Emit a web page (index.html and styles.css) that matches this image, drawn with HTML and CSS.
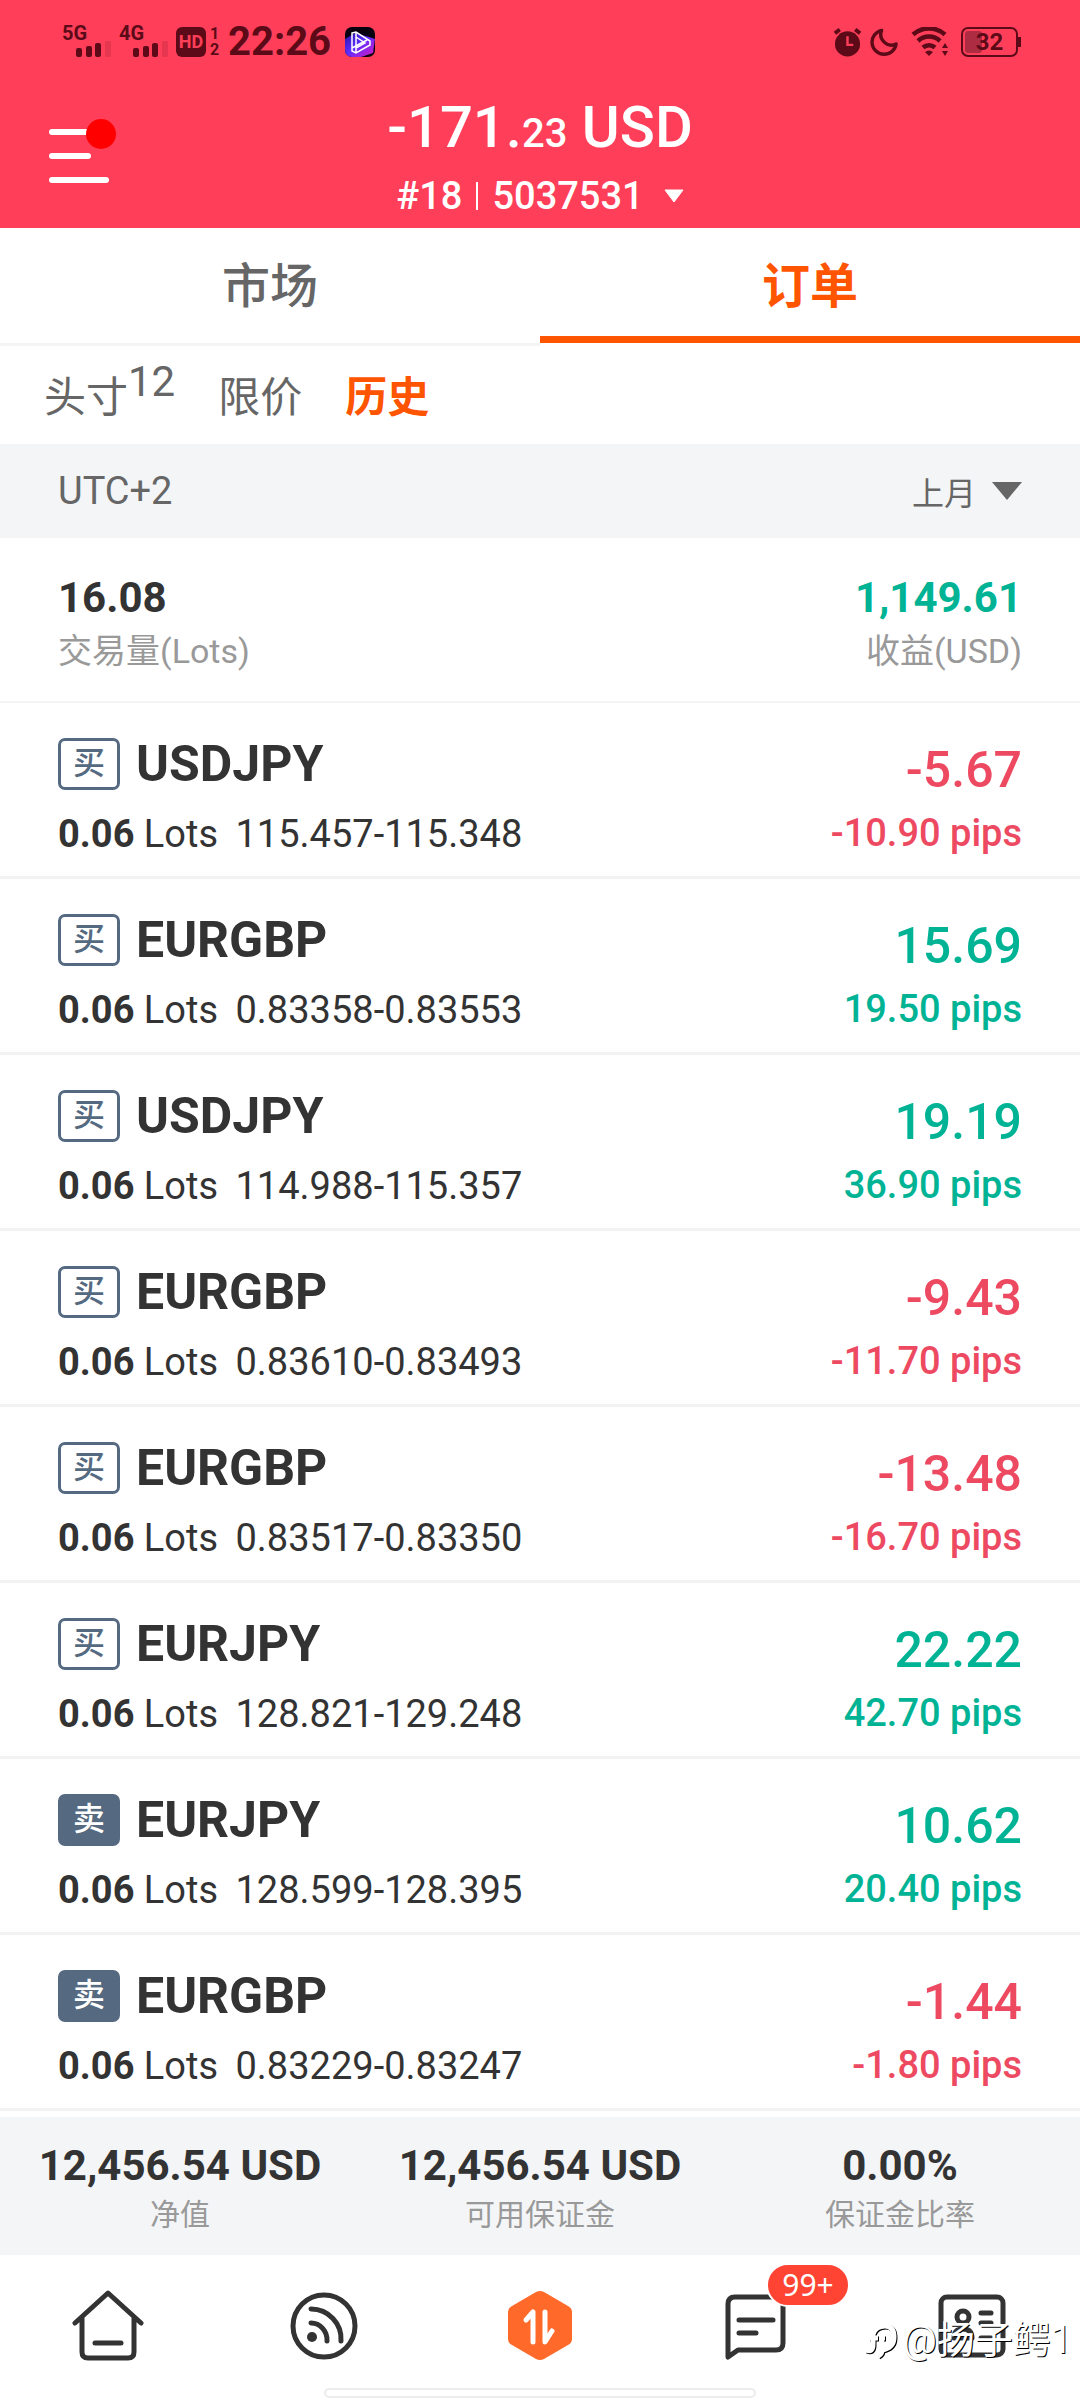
FILE: index.html
```html
<!DOCTYPE html>
<html lang="zh-CN">

<head>
    <meta charset="UTF-8">
    <meta name="viewport" content="width=device-width, initial-scale=1.0">
    <title>订单</title>
    <link rel="stylesheet" href="styles.css">
</head>
<body>
    <header class="top">
        <div class="status-bar">
            <div class="status-left">
                <span class="signal">
                    <span class="net">5G</span>
                    <svg class="bars" viewBox="0 0 36 16"><rect x="0" y="7" width="6" height="9" rx="2"/><rect x="10" y="5" width="6" height="11" rx="2"/><rect x="19" y="2" width="6" height="14" rx="2"/><rect x="29" y="0" width="6" height="16" rx="1" opacity=".15"/></svg>
                </span>
                <span class="signal">
                    <span class="net">4G</span>
                    <svg class="bars" viewBox="0 0 36 16"><rect x="0" y="7" width="6" height="9" rx="2"/><rect x="10" y="5" width="6" height="11" rx="2"/><rect x="19" y="2" width="6" height="14" rx="2"/><rect x="29" y="0" width="6" height="16" rx="1" opacity=".15"/></svg>
                </span>
                <span class="hd">HD</span>
                <span class="sims"><span>1</span><span>2</span></span>
                <time class="clock">22:26</time>
                <svg class="app-badge" viewBox="0 0 30 30">
                    <defs>
                        <linearGradient id="glow" x1="0" y1="0" x2="1" y2="1">
                            <stop offset="0" stop-color="#2a10a0"/><stop offset=".45" stop-color="#5b2cff"/><stop offset="1" stop-color="#e01ac0"/>
                        </linearGradient>
                    </defs>
                    <rect width="30" height="30" rx="7" fill="#08000f"/>
                    <path d="M0 12L10 6l14 4 6 2-2 14-12 4H7a7 7 0 0 1-7-7z" fill="url(#glow)"/>
                    <path d="M7 6l4-1 14 9v4l-14 8-4-2zM11 5v21M7 21l15-8M11 10l9 6-9 5" fill="none" stroke="#fff" stroke-width="1.5"/>
                </svg>
            </div>
            <div class="status-right">
                <svg class="ic-alarm" viewBox="0 0 30 30">
                    <circle cx="15" cy="17" r="13"/>
                    <path d="M2 6l5-4M28 6l-5-4" stroke="currentColor" stroke-width="4"/>
                    <path d="M15 9v9h6" fill="none" stroke="#ff3f59" stroke-width="2.5"/>
                </svg>
                <svg class="ic-moon" viewBox="0 0 30 30"><path d="M12 3A12.5 12.5 0 1 0 27 17 11 11 0 0 1 12 3z" fill="none" stroke="currentColor" stroke-width="3.5" stroke-linejoin="round"/></svg>
                <svg class="ic-wifi" viewBox="0 0 38 30">
                    <path d="M2 7.500a24 24 0 0 1 32 0M7 14a16 16 0 0 1 22 0M12 20.500a9 9 0 0 1 12 0" fill="none" stroke="currentColor" stroke-width="4.5"/>
                    <path d="M14 25q4-3 8 0l-4 4zM31 21l3-5 3 5zM31 24h6l-3 5z"/>
                </svg>
                <span class="battery"><span class="battery-level"></span><span class="battery-text">32</span></span>
            </div>
        </div>
        <div class="account-bar">
            <button class="menu" type="button" aria-label="菜单">
                <svg viewBox="0 0 68 68">
                    <path d="M4 14h44M4 38h36M4 62h54" stroke="#fff" stroke-width="6" stroke-linecap="round"/>
                    <circle cx="53" cy="16" r="15" fill="#f00"/>
                </svg>
            </button>
            <div class="account">
                <div class="equity">-171.<small>23</small> USD</div>
                <button class="account-switch" type="button">#18<span class="bar"></span>5037531<svg viewBox="0 0 20 14"><path d="M1 1h18l-9 12z" fill="#fff" stroke="#fff" stroke-linejoin="round"/></svg></button>
            </div>
        </div>
    </header>

    <nav class="tabs">
        <a href="#market" class="tab">市场</a>
        <a href="#orders" class="tab active">订单</a>
    </nav>

    <nav class="subtabs">
        <a href="#positions" class="subtab">头寸<span class="count">12</span></a>
        <a href="#pending" class="subtab">限价</a>
        <a href="#history" class="subtab active">历史</a>
    </nav>

    <div class="filter">
        <span>UTC+2</span>
        <button type="button" class="period">上月<svg viewBox="0 0 30 18"><path d="M0 0h30L15 18z" fill="#666"/></svg></button>
    </div>

    <section class="summary">
        <div>
            <div class="total">16.08</div>
            <div class="caption">交易量(Lots)</div>
        </div>
        <div class="right">
            <div class="total up">1,149.61</div>
            <div class="caption">收益(USD)</div>
        </div>
    </section>

    <ul class="orders">
        <li class="order">
            <div>
                <div class="symbol"><span class="side">买</span>USDJPY</div>
                <div class="detail"><b>0.06</b> Lots <span class="price">115.457-115.348</span></div>
            </div>
            <div class="right down">
                <div class="profit">-5.67</div>
                <div class="pips">-10.90 pips</div>
            </div>
        </li>
        <li class="order">
            <div>
                <div class="symbol"><span class="side">买</span>EURGBP</div>
                <div class="detail"><b>0.06</b> Lots <span class="price">0.83358-0.83553</span></div>
            </div>
            <div class="right up">
                <div class="profit">15.69</div>
                <div class="pips">19.50 pips</div>
            </div>
        </li>
        <li class="order">
            <div>
                <div class="symbol"><span class="side">买</span>USDJPY</div>
                <div class="detail"><b>0.06</b> Lots <span class="price">114.988-115.357</span></div>
            </div>
            <div class="right up">
                <div class="profit">19.19</div>
                <div class="pips">36.90 pips</div>
            </div>
        </li>
        <li class="order">
            <div>
                <div class="symbol"><span class="side">买</span>EURGBP</div>
                <div class="detail"><b>0.06</b> Lots <span class="price">0.83610-0.83493</span></div>
            </div>
            <div class="right down">
                <div class="profit">-9.43</div>
                <div class="pips">-11.70 pips</div>
            </div>
        </li>
        <li class="order">
            <div>
                <div class="symbol"><span class="side">买</span>EURGBP</div>
                <div class="detail"><b>0.06</b> Lots <span class="price">0.83517-0.83350</span></div>
            </div>
            <div class="right down">
                <div class="profit">-13.48</div>
                <div class="pips">-16.70 pips</div>
            </div>
        </li>
        <li class="order">
            <div>
                <div class="symbol"><span class="side">买</span>EURJPY</div>
                <div class="detail"><b>0.06</b> Lots <span class="price">128.821-129.248</span></div>
            </div>
            <div class="right up">
                <div class="profit">22.22</div>
                <div class="pips">42.70 pips</div>
            </div>
        </li>
        <li class="order">
            <div>
                <div class="symbol"><span class="side sell">卖</span>EURJPY</div>
                <div class="detail"><b>0.06</b> Lots <span class="price">128.599-128.395</span></div>
            </div>
            <div class="right up">
                <div class="profit">10.62</div>
                <div class="pips">20.40 pips</div>
            </div>
        </li>
        <li class="order">
            <div>
                <div class="symbol"><span class="side sell">卖</span>EURGBP</div>
                <div class="detail"><b>0.06</b> Lots <span class="price">0.83229-0.83247</span></div>
            </div>
            <div class="right down">
                <div class="profit">-1.44</div>
                <div class="pips">-1.80 pips</div>
            </div>
        </li>
    </ul>

    <section class="balance">
        <div><strong>12,456.54 USD</strong><span>净值</span></div>
        <div><strong>12,456.54 USD</strong><span>可用保证金</span></div>
        <div><strong>0.00%</strong><span>保证金比率</span></div>
    </section>

    <nav class="bottom-nav">
        <a href="#home" aria-label="首页">
            <svg viewBox="0 0 72 72"><path d="M3 34L36 4l33 30M10 29v34q0 6 6 6h40q6 0 6-6V29M23 54h26"/></svg>
        </a>
        <a href="#feed" aria-label="动态">
            <svg viewBox="0 0 72 72"><circle cx="36" cy="37" r="31"/><path d="M23 20a30 30 0 0 1 30 32M23 34a16 17 0 0 1 16 18"/><circle cx="24" cy="48" r="5" class="solid"/></svg>
        </a>
        <a href="#trade" aria-label="交易">
            <svg viewBox="0 0 72 72"><path d="M32 3q4-2 8 0l24 14q4 2 4 6v27q0 4-4 6L40 70q-4 2-8 0L8 56q-4-2-4-6V23q0-4 4-6z" class="hex"/><path d="M22 31l7-8v30M41 23v30l7-11" class="arrows"/></svg>
        </a>
        <a href="#messages" aria-label="消息">
            <svg viewBox="0 0 72 72"><path d="M8 68V15q0-7 7-7h42q6 0 6 6v40q0 7-7 7H18zM19 31h34M19 44h17"/></svg>
            <span class="badge">99+</span>
        </a>
        <a href="#me" aria-label="我的">
            <svg viewBox="0 0 72 72"><rect x="5" y="8" width="62" height="58" rx="6"/><circle cx="27" cy="28" r="6"/><path d="M45 24h10M45 34h10M18 49q0-9 9-9t9 9zM45 49h10"/></svg>
        </a>
        <div class="home-indicator"></div>
        <div class="watermark">
            <svg viewBox="0 0 36 40"><path d="M3 30q7 3 7-6V14q3-8 12-8 9 0 9 11 0 11-12 13 0 4-4 6M6 18h9M20 18h2"/></svg>@扬子鳄1
        </div>
    </nav>
</body>
</html>
```
FILE: styles.css
```css
* {
    box-sizing: border-box;
}

body {
    margin: 0;
    background-color: #fff;
    color: #333;
    font-family: Roboto, "Noto Sans CJK SC", sans-serif;
    font-size: 38px;
}

a {
    color: inherit;
    text-decoration: none;
}

button {
    padding: 0;
    border: none;
    background: none;
    color: inherit;
    font: inherit;
    cursor: pointer;
}

svg {
    display: block;
}

/* Header */
.top {
    height: 228px;
    background-color: #ff3f59;
    color: #fff;
}

.status-bar {
    display: flex;
    justify-content: space-between;
    align-items: center;
    height: 84px;
    padding: 0 62px;
    color: #5c0a18;
    fill: currentColor;
}

.status-left,
.status-right {
    display: flex;
    align-items: center;
}

.signal {
    display: flex;
    flex-direction: column;
    width: 57px;
    height: 34px;
}

.net {
    font-size: 20px;
    font-weight: 700;
    line-height: 16px;
}

.bars {
    width: 36px;
    height: 16px;
    margin-left: 14px;
}

.hd {
    width: 30px;
    height: 30px;
    border-radius: 6px;
    background-color: #5c0a18;
    color: #ff3f59;
    font-size: 18px;
    font-weight: 700;
    line-height: 30px;
    text-align: center;
}

.sims {
    display: flex;
    flex-direction: column;
    width: 22px;
    padding-left: 4px;
    font-size: 16px;
    font-weight: 700;
    line-height: 16px;
}

.clock {
    font-size: 40px;
    font-weight: 700;
    line-height: 40px;
}

.app-badge {
    width: 30px;
    height: 30px;
    margin-left: 14px;
}

.status-right {
    gap: 8px;
}

.ic-alarm,
.ic-moon {
    width: 29px;
    height: 30px;
}

.ic-wifi {
    width: 38px;
    height: 30px;
    margin: 0 4px;
}

.battery {
    position: relative;
    width: 57px;
    height: 30px;
    border: 2px solid #5c0a18;
    border-radius: 7px;
    font-size: 24px;
    font-weight: 700;
    line-height: 26px;
    text-align: center;
}

.battery::after {
    content: "";
    position: absolute;
    top: 8px;
    right: -5px;
    width: 3px;
    height: 10px;
    background-color: #5c0a18;
}

.battery-level {
    position: absolute;
    top: 2px;
    bottom: 2px;
    left: 2px;
    width: 17px;
    border-radius: 3px;
    background-color: #ad2c42;
}

.battery-text {
    position: relative;
}

.account-bar {
    display: grid;
    grid-template-columns: 120px 1fr 120px;
}

.menu {
    align-self: start;
    margin: 34px 0 0 48px;
    width: 68px;
}

.account {
    display: flex;
    flex-direction: column;
    align-items: center;
}

.equity {
    font-size: 58px;
    font-weight: 500;
    line-height: 86px;
}

.equity small {
    font-size: 40px;
}

.account-switch {
    display: flex;
    align-items: center;
    font-weight: 500;
    line-height: 38px;
}

.account-switch .bar {
    width: 2px;
    height: 28px;
    margin: 0 14px;
    background-color: #fff;
}

.account-switch svg {
    width: 20px;
    margin-left: 20px;
}

/* Tabs */
.tabs {
    display: grid;
    grid-template-columns: 1fr 1fr;
    height: 118px;
}

.tab {
    padding-top: 3px;
    border-bottom: 3px solid #f4f4f4;
    color: #666;
    font-size: 48px;
    font-weight: 500;
    line-height: 112px;
    text-align: center;
}

.tab.active {
    border-bottom-color: #fff;
    box-shadow: inset 0 -7px #ff5500;
    color: #ff5500;
    font-weight: 700;
}

.subtabs {
    display: flex;
    gap: 43px;
    height: 98px;
    padding: 0 44px;
}

.subtab {
    display: flex;
    color: #666;
    font-size: 42px;
    line-height: 104px;
}

.subtab.active {
    color: #ff5500;
    font-weight: 700;
}

.count {
    line-height: 72px;
}

.filter {
    display: flex;
    justify-content: space-between;
    align-items: center;
    height: 94px;
    padding: 0 58px;
    background-color: #f4f5f7;
    color: #666;
}

.period {
    display: flex;
    align-items: center;
    font-size: 32px;
}

.period svg {
    width: 30px;
    margin-left: 16px;
}

/* Totals */
.summary {
    display: flex;
    justify-content: space-between;
    height: 165px;
    padding: 30px 58px 0;
    border-bottom: 2px solid #f4f4f4;
}

.total {
    font-size: 42px;
    font-weight: 700;
    line-height: 60px;
}

.caption {
    color: #999;
    font-size: 34px;
    line-height: 46px;
}

.right {
    text-align: right;
}

.up {
    color: #00b395;
}

.down {
    color: #ed4a62;
}

/* Order list */
.orders {
    margin: 0;
    padding: 0 0 6px;
    list-style: none;
}

.order {
    display: flex;
    justify-content: space-between;
    height: 176px;
    padding: 28px 58px 0;
    border-bottom: 3px solid #f2f2f3;
}

.symbol {
    display: flex;
    align-items: center;
    gap: 16px;
    font-size: 50px;
    font-weight: 700;
    line-height: 66px;
}

.side {
    width: 62px;
    height: 52px;
    border: 3px solid #556980;
    border-radius: 7px;
    color: #556980;
    font-size: 32px;
    font-weight: 500;
    line-height: 44px;
    text-align: center;
}

.side.sell {
    background-color: #556980;
    color: #fff;
}

.detail {
    line-height: 74px;
}

.price {
    margin-left: 8px;
}

.profit {
    font-size: 50px;
    font-weight: 500;
    line-height: 78px;
}

.pips {
    font-weight: 500;
    line-height: 48px;
}

/* Account balance */
.balance {
    display: grid;
    grid-template-columns: repeat(3, 1fr);
    height: 138px;
    padding-top: 21px;
    background-color: #f4f5f7;
    text-align: center;
}

.balance strong,
.balance span {
    display: block;
}

.balance strong {
    font-size: 42px;
    line-height: 56px;
}

.balance span {
    color: #999;
    font-size: 30px;
    line-height: 42px;
}

/* Bottom navigation */
.bottom-nav {
    position: relative;
    display: grid;
    grid-template-columns: repeat(5, 1fr);
    height: 145px;
    padding-top: 34px;
    overflow: hidden;
}

.bottom-nav a {
    position: relative;
    display: flex;
    justify-content: center;
    align-items: start;
}

.bottom-nav a svg {
    width: 72px;
    height: 72px;
    fill: none;
    stroke: #333;
    stroke-width: 5;
    stroke-linecap: round;
    stroke-linejoin: round;
}

.bottom-nav .solid {
    fill: #333;
    stroke: none;
}

.bottom-nav .hex {
    fill: #ff6a2b;
    stroke: none;
}

.bottom-nav .arrows {
    stroke: #fff;
}

.badge {
    position: absolute;
    top: -26px;
    left: 118px;
    width: 84px;
    height: 44px;
    border: 2px solid #fff;
    border-radius: 22px;
    background-color: #ff4433;
    color: #fff;
    font-family: "Noto Sans", sans-serif;
    font-size: 30px;
    line-height: 40px;
    text-align: center;
}

.home-indicator {
    position: absolute;
    bottom: 2px;
    left: 30%;
    width: 40%;
    height: 10px;
    border: 2px solid #ececec;
    border-radius: 5px;
    background-color: #fff;
}

.watermark {
    position: absolute;
    right: 8px;
    bottom: 30px;
    display: flex;
    align-items: center;
    color: #fff;
    font-size: 38px;
    line-height: 60px;
    text-shadow: 1px 1px 0 #000;
}

.watermark svg {
    width: 36px;
    height: 40px;
    margin-right: 4px;
    fill: none;
    stroke: #fff;
    stroke-width: 5;
    filter: drop-shadow(1px 1px 0 #000);
}
```
